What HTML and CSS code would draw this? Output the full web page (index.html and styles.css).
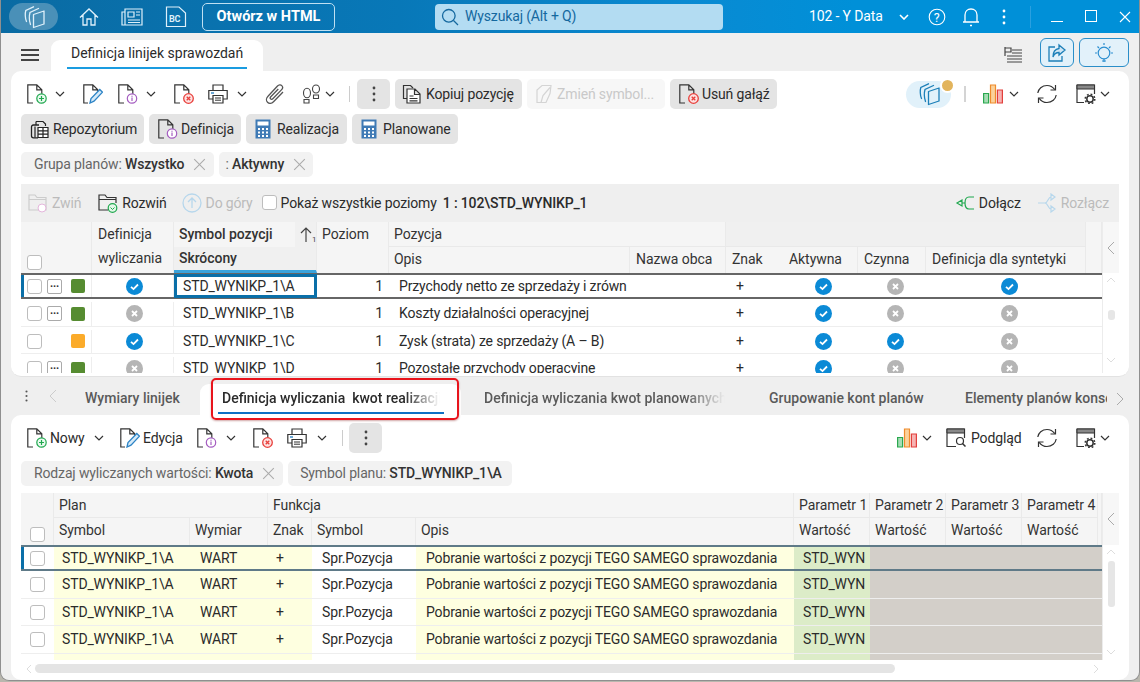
FILE: index.html
```html
<!DOCTYPE html>
<html lang="pl">
<head>
<meta charset="utf-8">
<title>Definicja linijek sprawozdań</title>
<link rel="stylesheet" href="styles.css">
</head>
<body>
<svg class="defs" width="0" height="0" aria-hidden="true">
  <symbol id="doc" viewBox="0 0 20 20"><path d="M6 19H.8V.8h9l5 5v6M9.800 .8v5H14.800" fill="none" stroke="#333" stroke-width="1.200"/></symbol>
  <symbol id="doc-plus" viewBox="0 0 20 20"><use href="#doc"/><circle cx="14.500" cy="14.500" r="4.700" fill="#eafaf0" stroke="#1fa84e" stroke-width="1.200"/><path d="M14.500 12v5M12 14.500h5" stroke="#1fa84e" stroke-width="1.200"/></symbol>
  <symbol id="doc-edit" viewBox="0 0 20 20"><path d="M5 19H.8V.8h9l5 5v2M9.800 .8v5H14.800" fill="none" stroke="#333" stroke-width="1.200"/><path d="M7 19l1-4.500L16.800 5.500l2.700 2.700-8.500 9z" fill="#d6eaf8" stroke="#2d84c6" stroke-width="1.300"/></symbol>
  <symbol id="doc-info" viewBox="0 0 20 20"><use href="#doc"/><circle cx="14" cy="14.500" r="4.700" fill="#fff" stroke="#a45cc0" stroke-width="1.200"/><path d="M14 13.500V17M14 11.800v1" stroke="#a45cc0" stroke-width="1.200"/></symbol>
  <symbol id="doc-x" viewBox="0 0 20 20"><use href="#doc"/><circle cx="14.500" cy="14.500" r="4.800" fill="#fde3e3" stroke="#e8403c" stroke-width="1.300"/><path d="M12.700 12.700l3.600 3.600M16.300 12.700l-3.600 3.600" stroke="#e8403c" stroke-width="1.300"/></symbol>
  <symbol id="print" viewBox="0 0 20 20"><path d="M5 6V1h10v5M5 15H.8V6.500h18.400V15H15" fill="none" stroke="#333" stroke-width="1.200"/><path d="M3 9h3" stroke="#2d84c6" stroke-width="1.400"/><path d="M5 11.500h10v7.500H5z" fill="#fff" stroke="#333" stroke-width="1.200"/><path d="M7 14h6M7 16.200h6" stroke="#333"/></symbol>
  <symbol id="clip" viewBox="0 0 20 20"><path d="M18 8l-9.500 9.800c-1.800 1.800-4.500 2-6 .5s-1.300-4.200.5-6L12.500 2c1.300-1.300 3.200-1.500 4.300-.4s.9 3-.4 4.300L7.800 14.700c-.7.700-1.600.8-2.200.2s-.5-1.500.2-2.200l7.500-7.700" fill="none" stroke="#555" stroke-width="1.300"/></symbol>
  <symbol id="steps" viewBox="0 0 20 20"><ellipse cx="5" cy="9" rx="3.500" ry="4.800" fill="none" stroke="#444" stroke-width="1.100"/><path d="M2 15.500h5v3.500H2z" fill="none" stroke="#444" stroke-width="1.100"/><ellipse cx="14" cy="5" rx="3.500" ry="4" fill="none" stroke="#444" stroke-width="1.100"/><path d="M11.500 11h5v3.500h-5z" fill="none" stroke="#444" stroke-width="1.100"/></symbol>
  <symbol id="copy" viewBox="0 0 20 20"><path d="M5 14.500H1.500v-13h7l2.500 2.500" fill="none" stroke="#333" stroke-width="1.200"/><path d="M5 5h8l5 5v9H5zM12.500 5v5.500H18M7.500 12h4M7.500 14.500h8M7.500 16.800h8" fill="#fff" stroke="#333" stroke-width="1.200"/></symbol>
  <symbol id="repo" viewBox="0 0 20 20"><path d="M6 2.500h7l2.500 2.500V7M6 2.500V6" fill="none" stroke="#222" stroke-width="1.200"/><path d="M3.500 6H9M3.500 6C2 6 1.500 7 1.500 8v9c0 1 .5 1.800 2 1.800H8" fill="none" stroke="#222" stroke-width="1.300"/><path d="M5 7.500v11" stroke="#222" stroke-width="1.200"/><path d="M8 8.500h10v10H8zM8 11.800h10M8 15.200h10M13 8.500v10" fill="#fff" stroke="#222" stroke-width="1.200"/></symbol>
  <symbol id="calc" viewBox="0 0 20 20"><rect x="2.500" y="0.500" width="15" height="19" fill="#3f7ab5"/><rect x="4.500" y="2.500" width="11" height="4" fill="#fff"/><path d="M5 9h2v2H5zM9 9h2v2H9zM13 9h2v2h-2zM5 12.500h2v2H5zM9 12.500h2v2H9zM13 12.500h2v2h-2zM5 16h2v2H5zM9 16h2v2H9zM13 16h2v2h-2z" fill="#fff"/></symbol>
  <symbol id="ghost" viewBox="0 0 20 20"><path d="M3 18.500V6l5-4.500h9l-1 8-4 9zM7 18.500l2-7 7-8" fill="none" stroke="#d4d4d4" stroke-width="1.200"/></symbol>
  <symbol id="chart" viewBox="0 0 20 20"><path d="M.6 9.500h5v9.500h-5z" fill="#a6dcb4" stroke="#2aa84f" stroke-width="1.200"/><path d="M7.500 1h5v18h-5z" fill="#fad29c" stroke="#ef8b2c" stroke-width="1.200"/><path d="M14.400 6h5v13h-5z" fill="#f6b3b3" stroke="#e2403c" stroke-width="1.200"/></symbol>
  <symbol id="refresh" viewBox="0 0 20 20"><path d="M.8 9C1.300 5 5 1.500 10 1.500c3.500 0 6 1.700 7.800 4.200M19.200 11c-.5 4-4.200 7.500-9.200 7.500-3.500 0-6-1.700-7.800-4.200" fill="none" stroke="#333" stroke-width="1.200"/><path d="M18.500 1V6h-5M1.500 19v-5h5" fill="none" stroke="#333" stroke-width="1.200"/></symbol>
  <symbol id="settings" viewBox="0 0 20 20"><path d="M8 18.500H1V1h17.500v9" fill="none" stroke="#333" stroke-width="1.200"/><path d="M1 1h17.500v4H1z" fill="#888" stroke="#333" stroke-width="1"/><circle cx="14" cy="15" r="3.200" fill="#fff" stroke="#333" stroke-width="1.500"/><circle cx="14" cy="15" r="4.800" fill="none" stroke="#333" stroke-width="1.500" stroke-dasharray="1.800 1.970"/></symbol>
  <symbol id="preview" viewBox="0 0 20 20"><path d="M10 18.500H1V1h17.500v9" fill="none" stroke="#333" stroke-width="1.200"/><path d="M1 1h17.500v4H1z" fill="#888" stroke="#333" stroke-width="1"/><circle cx="14" cy="13" r="3.500" fill="#fff" stroke="#333" stroke-width="1.200"/><path d="M16.500 15.500l3 3" stroke="#333" stroke-width="1.500"/></symbol>
  <symbol id="chev" viewBox="0 0 10 6"><path d="M1 1l4 4 4-4" fill="none" stroke="#333" stroke-width="1.200"/></symbol>
  <symbol id="yes" viewBox="0 0 17 17"><circle cx="8.500" cy="8.500" r="8.500" fill="#0b8ad6"/><path d="M5 8.800l2.500 2.300L12 6.500" fill="none" stroke="#fff" stroke-width="1.800"/></symbol>
  <symbol id="no" viewBox="0 0 17 17"><circle cx="8.500" cy="8.500" r="8.500" fill="#b5b5b5"/><path d="M6 6l5 5M11 6l-5 5" stroke="#fff" stroke-width="1.800"/></symbol>
  <symbol id="dots" viewBox="0 0 4 16"><circle cx="2" cy="2" r="1.400"/><circle cx="2" cy="8" r="1.400"/><circle cx="2" cy="14" r="1.400"/></symbol>
  <symbol id="stack" viewBox="0 0 24 24"><path d="M11.500 9.500L22 6v13l-10.500 3.500z" fill="none" stroke="currentColor" stroke-width="1.300" stroke-linejoin="round"/><path d="M8.500 19.500C7.300 16 7.300 10 8 7.500L16.500 3.500" fill="none" stroke="currentColor" stroke-width="1.300" stroke-linecap="round"/><path d="M4.500 16.500C3 13.500 3 8 3.800 5.500L11.500 1.800" fill="none" stroke="currentColor" stroke-width="1.300" stroke-linecap="round"/></symbol>
</svg>

<div class="app">
  <header class="topbar">
    <span class="logo-pill"><svg class="i24"><use href="#stack"/></svg></span>
    <svg class="i20 home" viewBox="0 0 20 20"><path d="M1 10.500L10 2l9 8.500M4 8v10h4v-6h4v6h4V8" fill="none" stroke="#dff0fa" stroke-width="1.300"/></svg>
    <svg class="i22 news" viewBox="0 0 22 20"><path d="M4 2h17v16H4zM4 5H1v13h3M7 5h6v5H7zM15 5h4M15 8h4M7 13h12M7 15.500h12" fill="none" stroke="#dff0fa" stroke-width="1.200"/></svg>
    <svg class="i22 bc" viewBox="0 0 22 22"><path d="M14 1H1.500v19.500h19V7z" fill="none" stroke="#dff0fa" stroke-width="1.200"/><text x="4" y="16" class="bc-text">BC</text></svg>
    <button class="open-html">Otwórz w HTML</button>
    <div class="search">
      <svg class="i18" viewBox="0 0 18 18"><circle cx="7.800" cy="7.800" r="6.300" fill="none" stroke="#14689f" stroke-width="1.300"/><path d="M12.500 12.500l4.500 4.500" stroke="#14689f" stroke-width="1.300"/></svg>
      <span>Wyszukaj (Alt + Q)</span>
    </div>
    <span class="company">102 - Y Data</span>
    <svg class="chev-w" viewBox="0 0 10 6"><path d="M1 1l4 4 4-4" fill="none" stroke="#fff" stroke-width="1.600"/></svg>
    <svg class="i18 help" viewBox="0 0 18 18"><circle cx="9" cy="9" r="7.800" fill="none" stroke="#fff" stroke-width="1.100"/><text x="5.800" y="13.500" class="help-text">?</text></svg>
    <svg class="i18 bell" viewBox="0 0 18 20"><path d="M3 15V8c0-3.500 2.500-6 6-6s6 2.500 6 6v7zM1 15h16M8 18.500h2" fill="none" stroke="#fff" stroke-width="1.300"/></svg>
    <svg class="kebab-w" fill="#fff"><use href="#dots"/></svg>
    <span class="bar-sep"></span>
    <span class="win-min"></span>
    <span class="win-max"></span>
    <svg class="win-close" viewBox="0 0 12 12"><path d="M1 1l10 10M11 1L1 11" stroke="#fff" stroke-width="1.100"/></svg>
  </header>

  <div class="tabrow">
    <span class="burger"><i></i><i></i><i></i></span>
    <div class="doc-tab"><span>Definicja linijek sprawozdań</span></div>
    <svg class="i18 flaglist" viewBox="0 0 18 16"><path d="M1 0v9M1 1h6v4H1M8 3h10M8 6h10M3 9h15M3 12h15M3 15h15" fill="none" stroke="#444" stroke-width="1.200"/></svg>
    <button class="blue-btn share"><svg class="i20" viewBox="0 0 20 20"><path d="M8 4H2v14h13v-5" fill="none" stroke="#1c7fb8" stroke-width="1.300"/><path d="M12 2l6 5-6 5V9.500C9 9.500 7 11 6 14c0-5 2-8 6-8.500z" fill="#cfe6f5" stroke="#1c7fb8" stroke-width="1.300"/></svg></button>
    <button class="blue-btn bulb"><svg class="i22" viewBox="0 0 22 22"><circle cx="11" cy="11" r="5.800" fill="none" stroke="#2a8ed0" stroke-width="1.200"/><path d="M11 17v3M9 19h4M11 1v2M2 11h2M18 11h2M4.500 4.500l1.500 1.500M17.500 4.500L16 6" stroke="#2a8ed0" stroke-width="1.200"/></svg></button>
  </div>

  <section class="panel panel-top">
    <div class="toolbar">
      <svg class="ic"><use href="#doc-plus"/></svg>
      <svg class="cv m8"><use href="#chev"/></svg>
      <svg class="ic m18"><use href="#doc-edit"/></svg>
      <svg class="ic m15"><use href="#doc-info"/></svg>
      <svg class="cv m8"><use href="#chev"/></svg>
      <svg class="ic m18"><use href="#doc-x"/></svg>
      <svg class="ic m14"><use href="#print"/></svg>
      <svg class="cv m9"><use href="#chev"/></svg>
      <svg class="ic m18"><use href="#clip"/></svg>
      <svg class="ic m17"><use href="#steps"/></svg>
      <svg class="cv m3"><use href="#chev"/></svg>
      <span class="sep m14"></span>
      <button class="btn kebab m7"><svg class="dots" fill="#444"><use href="#dots"/></svg></button>
      <button class="btn btn-copy m5"><svg class="ic"><use href="#copy"/></svg>Kopiuj pozycję</button>
      <button class="btn btn-sym off m5"><svg class="ic"><use href="#ghost"/></svg>Zmień symbol...</button>
      <button class="btn btn-del m5"><svg class="ic"><use href="#doc-x"/></svg>Usuń gałąź</button>
      <span class="right">
        <span class="pill-wrap"><svg class="i24"><use href="#stack"/></svg><i class="dot"></i></span>
        <span class="sep sep-wide"></span>
        <svg class="ic m17"><use href="#chart"/></svg>
        <svg class="cv m6"><use href="#chev"/></svg>
        <svg class="ic m18"><use href="#refresh"/></svg>
        <svg class="ic m19"><use href="#settings"/></svg>
        <svg class="cv m4"><use href="#chev"/></svg>
      </span>
    </div>
    <div class="toolbar row2">
      <button class="btn btn-repo"><svg class="ic"><use href="#repo"/></svg>Repozytorium</button>
      <button class="btn btn-defi m5"><svg class="ic"><use href="#doc-info"/></svg>Definicja</button>
      <button class="btn btn-real m5"><svg class="ic"><use href="#calc"/></svg>Realizacja</button>
      <button class="btn btn-plan m5"><svg class="ic"><use href="#calc"/></svg>Planowane</button>
    </div>
    <div class="chips">
      <span class="chip">Grupa planów:&nbsp;<b>Wszystko</b><em class="x"></em></span>
      <span class="chip chip-tight">:&nbsp;<b>Aktywny</b><em class="x"></em></span>
    </div>
    <div class="gridbar">
      <span class="gb-item dim"><svg class="ic" viewBox="0 0 20 20"><path d="M1 17V2h6l2 2.500h9V17zM1 6.500h17" fill="none" stroke="#ccc" stroke-width="1.200"/><circle cx="14" cy="15" r="4" fill="#fff" stroke="#e4b6dc"/></svg>Zwiń</span>
      <span class="gb-item rozwin"><svg class="ic" viewBox="0 0 20 20"><path d="M10 17H1V2h6l2 2.500h9V10M1 6.500h17" fill="none" stroke="#333" stroke-width="1.200"/><circle cx="14.500" cy="15" r="4.300" fill="#e3f7e9" stroke="#1fa84e" stroke-width="1.200"/><path d="M12.500 14.500l2 2 2-2" fill="none" stroke="#1fa84e"/></svg>Rozwiń</span>
      <span class="gb-item dim up"><svg class="ic" viewBox="0 0 20 20"><circle cx="10" cy="10" r="9" fill="none" stroke="#b7d7ec" stroke-width="1.300"/><path d="M10 15V5M6 9l4-4 4 4" fill="none" stroke="#b7d7ec" stroke-width="1.300"/></svg>Do góry</span>
      <label class="gb-check"><span class="cb"></span>Pokaż wszystkie poziomy</label>
      <b class="gb-path">1 : 102\STD_WYNIKP_1</b>
      <span class="right">
        <span class="gb-item"><svg class="ic" viewBox="0 0 20 20"><path d="M19 4h-5c-3 0-4 3-4 6s1 6 4 6h5M9.500 10H7M7 7l-5 3 5 3z" fill="none" stroke="#1fa84e" stroke-width="1.200"/></svg>Dołącz</span>
        <span class="gb-item dim disconnect"><svg class="ic" viewBox="0 0 20 20"><path d="M1 10h7M8 10c3 0 3-6 6-6M8 10c3 0 3 6 6 6M14 1v6l4-3zM14 13v6l4-3z" fill="none" stroke="#b7d7ec" stroke-width="1.200"/></svg>Rozłącz</span>
      </span>
    </div>

    <div class="ghead g1">
      <div class="hc hc-check"><span class="cb"></span></div>
      <div class="hc hc-def"><span>Definicja</span><span>wyliczania</span></div>
      <div class="hc hc-sym">
        <div class="sym-top"><strong>Symbol pozycji</strong><span class="sort"><svg class="sort-ic" viewBox="0 0 16 17"><path d="M6 16V2M1 7l5-5 5 5" fill="none" stroke="#444" stroke-width="1.200"/><text x="12" y="16" class="sort-n">1</text></svg></span></div>
        <div class="sym-bot"><strong>Skrócony</strong></div>
      </div>
      <div class="hc hc-poz">Poziom</div>
      <div class="hc hc-group g1-pos">Pozycja</div>
      <div class="hc hc-group g1-band"></div>
      <div class="hc hc-sub g1-opis">Opis</div>
      <div class="hc hc-sub g1-obca">Nazwa obca</div>
      <div class="hc hc-sub g1-znak">Znak</div>
      <div class="hc hc-sub g1-akt">Aktywna</div>
      <div class="hc hc-sub g1-czy">Czynna</div>
      <div class="hc hc-sub g1-syn">Definicja dla syntetyki</div>
      <div class="hc g1-end"></div>
      <div class="hc-side"><svg viewBox="0 0 8 14"><path d="M7 1L1 7l6 6" fill="none" stroke="#aaa"/></svg></div>
    </div>
    <div class="gbody gbody-top">
      <div class="rows">
        <div class="row g1r selected">
          <span class="c c-cb"><span class="cb"></span></span><span class="c c-more"><span class="more">...</span></span><span class="c c-col"><i class="sq green"></i></span>
          <span class="c c-ic c-def"><svg class="st"><use href="#yes"/></svg></span>
          <span class="c c-sym focus">STD_WYNIKP_1\A</span><span class="c c-num">1</span><span class="c c-txt">Przychody netto ze sprzedaży i zrówn</span><span class="c"></span><span class="c c-plus">+</span>
          <span class="c c-ic c-akt"><svg class="st"><use href="#yes"/></svg></span><span class="c c-ic c-czy"><svg class="st"><use href="#no"/></svg></span><span class="c c-ic c-czy"><svg class="st"><use href="#yes"/></svg></span>
        </div>
        <div class="row g1r">
          <span class="c c-cb"><span class="cb"></span></span><span class="c c-more"><span class="more">...</span></span><span class="c c-col"><i class="sq green"></i></span>
          <span class="c c-ic c-def"><svg class="st"><use href="#no"/></svg></span>
          <span class="c c-sym">STD_WYNIKP_1\B</span><span class="c c-num">1</span><span class="c c-txt">Koszty działalności operacyjnej</span><span class="c"></span><span class="c c-plus">+</span>
          <span class="c c-ic c-akt"><svg class="st"><use href="#yes"/></svg></span><span class="c c-ic c-czy"><svg class="st"><use href="#no"/></svg></span><span class="c c-ic c-czy"><svg class="st"><use href="#no"/></svg></span>
        </div>
        <div class="row g1r">
          <span class="c c-cb"><span class="cb"></span></span><span class="c c-more"></span><span class="c c-col"><i class="sq orange"></i></span>
          <span class="c c-ic c-def"><svg class="st"><use href="#yes"/></svg></span>
          <span class="c c-sym">STD_WYNIKP_1\C</span><span class="c c-num">1</span><span class="c c-txt">Zysk (strata) ze sprzedaży (A – B)</span><span class="c"></span><span class="c c-plus">+</span>
          <span class="c c-ic c-akt"><svg class="st"><use href="#yes"/></svg></span><span class="c c-ic c-czy"><svg class="st"><use href="#yes"/></svg></span><span class="c c-ic c-czy"><svg class="st"><use href="#no"/></svg></span>
        </div>
        <div class="row g1r">
          <span class="c c-cb"><span class="cb"></span></span><span class="c c-more"><span class="more">...</span></span><span class="c c-col"><i class="sq green"></i></span>
          <span class="c c-ic c-def"><svg class="st"><use href="#no"/></svg></span>
          <span class="c c-sym">STD_WYNIKP_1\D</span><span class="c c-num">1</span><span class="c c-txt">Pozostałe przychody operacyjne</span><span class="c"></span><span class="c c-plus">+</span>
          <span class="c c-ic c-akt"><svg class="st"><use href="#yes"/></svg></span><span class="c c-ic c-czy"><svg class="st"><use href="#no"/></svg></span><span class="c c-ic c-czy"><svg class="st"><use href="#no"/></svg></span>
        </div>
      </div>
      <div class="vscroll vs-top">
        <svg class="vc" viewBox="0 0 10 6"><path d="M1 5l4-4 4 4" fill="none" stroke="#ddd"/></svg>
        <span class="thumb thumb-top"></span>
        <svg class="vc" viewBox="0 0 10 6"><path d="M1 1l4 4 4-4" fill="none" stroke="#ddd"/></svg>
      </div>
    </div>
  </section>

  <nav class="tabs2">
    <svg class="kebab-d" fill="#555"><use href="#dots"/></svg>
    <svg class="tab-arrow left" viewBox="0 0 8 14"><path d="M7 1L1 7l6 6" fill="none" stroke="#ccc"/></svg>
    <span class="t2 t-wym">Wymiary linijek</span>
    <span class="t2 active"><span class="fade">Definicja wyliczania&nbsp; kwot realizacji</span></span>
    <span class="t2 t-plan fade">Definicja wyliczania kwot planowanych</span>
    <span class="t2 t-gr">Grupowanie kont planów</span>
    <span class="t2 t-el">Elementy planów konsolidacji</span>
    <svg class="tab-arrow right" viewBox="0 0 8 14"><path d="M1 1l6 6-6 6" fill="none" stroke="#aaa"/></svg>
  </nav>

  <section class="panel panel-bot">
    <div class="toolbar">
      <svg class="ic"><use href="#doc-plus"/></svg><span class="lbl lbl-new m3">Nowy</span>
      <svg class="cv m13"><use href="#chev"/></svg>
      <svg class="ic m16"><use href="#doc-edit"/></svg><span class="lbl lbl-edit m3">Edycja</span>
      <svg class="ic m14"><use href="#doc-info"/></svg>
      <svg class="cv m9"><use href="#chev"/></svg>
      <svg class="ic m17"><use href="#doc-x"/></svg>
      <svg class="ic m14"><use href="#print"/></svg>
      <svg class="cv m10"><use href="#chev"/></svg>
      <span class="sep m15"></span>
      <button class="btn kebab m6"><svg class="dots" fill="#444"><use href="#dots"/></svg></button>
      <span class="right">
        <svg class="ic"><use href="#chart"/></svg>
        <svg class="cv m5"><use href="#chev"/></svg>
        <svg class="ic m14"><use href="#preview"/></svg><span class="lbl lbl-view m5">Podgląd</span>
        <svg class="ic m17"><use href="#refresh"/></svg>
        <svg class="ic m19"><use href="#settings"/></svg>
        <svg class="cv m4"><use href="#chev"/></svg>
      </span>
    </div>
    <div class="chips">
      <span class="chip">Rodzaj wyliczanych wartości:&nbsp;<b>Kwota</b><em class="x"></em></span>
      <span class="chip chip-noclose">Symbol planu:&nbsp;<b>STD_WYNIKP_1\A</b></span>
    </div>
    <div class="ghead g2">
      <div class="hc g2-check"><span class="cb"></span></div>
      <div class="hc hc-group g2-plan">Plan</div>
      <div class="hc hc-group g2-fun">Funkcja</div>
      <div class="hc hc-group g2-p1">Parametr 1</div>
      <div class="hc hc-group g2-p2">Parametr 2</div>
      <div class="hc hc-group g2-p3">Parametr 3</div>
      <div class="hc hc-group g2-p4">Parametr 4</div>
      <div class="hc hc-sub g2-a">Symbol</div>
      <div class="hc hc-sub g2-b">Wymiar</div>
      <div class="hc hc-sub g2-c">Znak</div>
      <div class="hc hc-sub g2-d">Symbol</div>
      <div class="hc hc-sub g2-e">Opis</div>
      <div class="hc hc-sub g2-f">Wartość</div>
      <div class="hc hc-sub g2-g">Wartość</div>
      <div class="hc hc-sub g2-h">Wartość</div>
      <div class="hc hc-sub g2-i">Wartość</div>
      <div class="hc g2-end"></div>
      <div class="hc-side g2-side"><svg viewBox="0 0 8 14"><path d="M7 1L1 7l6 6" fill="none" stroke="#aaa"/></svg></div>
    </div>
    <div class="gbody gbody-bot">
      <div class="rows">
        <div class="row g2r selected"><span class="c c-cb2"><span class="cb"></span></span><span class="c y p8">STD_WYNIKP_1\A</span><span class="c y p10">WART</span><span class="c y p12">+</span><span class="c p10">Spr.Pozycja</span><span class="c y p10">Pobranie wartości z pozycji TEGO SAMEGO sprawozdania</span><span class="c gr p9">STD_WYN</span><span class="c ash"></span></div>
        <div class="row g2r"><span class="c c-cb2"><span class="cb"></span></span><span class="c y p8">STD_WYNIKP_1\A</span><span class="c y p10">WART</span><span class="c y p12">+</span><span class="c p10">Spr.Pozycja</span><span class="c y p10">Pobranie wartości z pozycji TEGO SAMEGO sprawozdania</span><span class="c gr p9">STD_WYN</span><span class="c ash"></span></div>
        <div class="row g2r"><span class="c c-cb2"><span class="cb"></span></span><span class="c y p8">STD_WYNIKP_1\A</span><span class="c y p10">WART</span><span class="c y p12">+</span><span class="c p10">Spr.Pozycja</span><span class="c y p10">Pobranie wartości z pozycji TEGO SAMEGO sprawozdania</span><span class="c gr p9">STD_WYN</span><span class="c ash"></span></div>
        <div class="row g2r"><span class="c c-cb2"><span class="cb"></span></span><span class="c y p8">STD_WYNIKP_1\A</span><span class="c y p10">WART</span><span class="c y p12">+</span><span class="c p10">Spr.Pozycja</span><span class="c y p10">Pobranie wartości z pozycji TEGO SAMEGO sprawozdania</span><span class="c gr p9">STD_WYN</span><span class="c ash"></span></div>
        <div class="row g2r"><span class="c c-cb2"></span><span class="c y"></span><span class="c y"></span><span class="c y"></span><span class="c"></span><span class="c y"></span><span class="c gr"></span><span class="c ash"></span></div>
      </div>
      <div class="vscroll vs-bot">
        <svg class="vc" viewBox="0 0 10 6"><path d="M1 5l4-4 4 4" fill="none" stroke="#ddd"/></svg>
        <span class="thumb thumb-bot"></span>
        <svg class="vc" viewBox="0 0 10 6"><path d="M1 1l4 4 4-4" fill="none" stroke="#ddd"/></svg>
      </div>
    </div>
    <div class="hscroll">
      <svg class="hc-arrow" viewBox="0 0 6 10"><path d="M5 1L1 5l4 4" fill="none" stroke="#ddd"/></svg>
      <span class="hthumb"></span>
      <svg class="hc-arrow hc-r" viewBox="0 0 6 10"><path d="M1 1l4 4-4 4" fill="none" stroke="#ddd"/></svg>
    </div>
  </section>
</div>
</body>
</html>
```
FILE: styles.css
```css
* { box-sizing: border-box; }
html, body { margin: 0; padding: 0; }
body {
  width: 1140px; height: 682px; overflow: hidden;
  background: #b9b7ae;
  font: 14px/1.2 Roboto, "Liberation Sans", sans-serif;
  letter-spacing: -.14px;
  color: #2b2b2b;
}
.defs { position: absolute; }
button { font: inherit; letter-spacing: inherit; color: inherit; border: 0; padding: 0; background: none; }
svg { display: block; flex: none; }
.i18 { width: 18px; height: 18px; }
.i20 { width: 20px; height: 20px; }
.i22 { width: 22px; height: 22px; }
.i24 { width: 24px; height: 24px; }

.app {
  width: 1140px; height: 681px;
  background: #efefef;
  border: 1px solid #8f8f8f; border-top: 0;
  border-radius: 0 0 9px 9px;
  overflow: hidden;
  display: flex; flex-direction: column;
}

/* top bar */
.topbar {
  height: 33px; flex: none;
  display: flex; align-items: center;
  background: linear-gradient(90deg, #0a6ba3 0%, #0878b8 35%, #0a8ad2 60%, #0090d8 75%);
  color: #fff;
}
.logo-pill {
  margin-left: 8px; width: 49px; height: 27px; border-radius: 14px;
  background: #4a90b8; color: #dff0fa;
  display: flex; align-items: center; justify-content: center;
}
.home { margin-left: 21px; }
.news { margin-left: 22px; }
.bc { margin-left: 22px; }
.bc-text { font: 700 9px Roboto, sans-serif; fill: #dff0fa; }
.help-text { font: 400 12.500px Roboto, sans-serif; fill: #fff; }
.open-html {
  margin-left: 15px; width: 133px; height: 28px;
  border: 1px solid #bfe0f2; border-radius: 5px; letter-spacing: 0;
  font-weight: 700; font-size: 14.500px; color: #fff; white-space: nowrap;
}
.search {
  margin-left: 100px; width: 288px; height: 26px;
  background: #b3dcf2; border-radius: 4px;
  display: flex; align-items: center; gap: 6px; padding-left: 6px;
  color: #14689f; font-size: 14px;
}
.company { margin-left: 86px; font-weight: 400; width: 90px; white-space: nowrap; }
.chev-w { width: 10px; height: 6px; }
.help { margin-left: 19px; }
.bell { margin-left: 16px; height: 20px; }
.kebab-w { width: 4px; height: 16px; margin-left: 22px; }
.bar-sep { width: 1px; height: 22px; background: #2aa0e0; margin-left: 24px; }
.win-min { width: 12px; height: 1px; background: #fff; margin-left: 20px; margin-top: 9px; }
.win-max { width: 12px; height: 12px; border: 1.300px solid #fff; margin-left: 22px; margin-top: -2px; }
.win-close { width: 12px; height: 12px; margin-left: 22px; }

/* document tab row */
.tabrow { height: 38px; flex: none; display: flex; align-items: flex-end; }
.burger {
  margin-left: 20px; width: 18px; align-self: flex-start; margin-top: 16px;
  display: flex; flex-direction: column; gap: 3px;
}
.burger i { display: block; height: 2px; background: #444; }
.doc-tab {
  margin-left: 12px; width: 212px; height: 31px;
  background: #fff; border-radius: 9px 9px 0 0;
  padding: 0 16px 0 16px; letter-spacing: 0;
}
.doc-tab span {
  display: block; height: 29px; line-height: 26px; padding-left: 4px;
  border-bottom: 2px solid #1a9ce0; white-space: nowrap;
}
.flaglist { margin-left: 741px; align-self: flex-start; margin-top: 14px; height: 16px; }
.blue-btn {
  height: 29px; border: 1px solid #2a8ec9; border-radius: 6px; background: #e2f1fa;
  display: flex; align-items: center; justify-content: center;
  align-self: flex-start; margin-top: 5px;
}
.share { width: 34px; margin-left: 18px; }
.bulb { width: 50px; margin-left: 5px; }

/* panels */
.panel {
  margin: 0 10px; width: 1118px; background: #fff;
  border-radius: 10px; padding: 8px 10px 0; flex: none;
}
.panel-top { height: 306px; border-bottom: 1px solid #e2e2e2; }
.panel-bot { height: 265px; }

.toolbar { height: 30px; display: flex; align-items: center; padding-left: 6px; }
.row2 { margin-top: 5px; padding-left: 0; }
.right { margin-left: auto; display: flex; align-items: center; }
.toolbar > .right { padding-right: 9px; }
.ic { width: 20px; height: 20px; }
.cv { width: 10px; height: 6px; }
.m3 { margin-left: 3px; } .m4 { margin-left: 4px; } .m5 { margin-left: 5px; } .m6 { margin-left: 6px; }
.m7 { margin-left: 7px; } .m8 { margin-left: 8px; } .m9 { margin-left: 9px; } .m10 { margin-left: 10px; }
.m13 { margin-left: 13px; } .m14 { margin-left: 14px; } .m15 { margin-left: 15px; } .m16 { margin-left: 16px; }
.m17 { margin-left: 17px; } .m18 { margin-left: 18px; } .m19 { margin-left: 19px; }
.sep { width: 1px; height: 16px; background: #ccc; }
.btn {
  height: 30px; background: #e4e4e4; border-radius: 5px;
  display: flex; align-items: center; gap: 3px; padding: 0 0 0 9px; white-space: nowrap;
}
.btn-copy { width: 127px; padding-left: 7px; gap: 4px; }
.btn-sym { width: 138px; padding-left: 7px; }
.btn-del { width: 107px; }
.btn-repo { width: 123px; }
.btn-defi { width: 92px; }
.btn-real { width: 101px; padding-left: 7px; gap: 4px; }
.btn-plan { width: 106px; padding-left: 7px; gap: 4px; }
.btn.off { background: #f7f7f7; color: #c9c9c9; }
.kebab { width: 33px; justify-content: center; padding: 0; }
.dots { width: 4px; height: 16px; }
.pill-wrap {
  position: relative; width: 45px; height: 27px; border-radius: 14px; background: #e1f1fa; color: #1c7fb8;
  display: flex; align-items: center; justify-content: center;
}
.dot {
  position: absolute; right: -4px; top: -3px; width: 15px; height: 15px; border-radius: 50%;
  background: #e2b45c; border: 2px solid #fff;
}
.sep-wide { width: 2px; height: 16px; margin-left: 13px; background: #d4d4d4; }

/* filter chips */
.chips { margin-top: 8px; height: 25px; display: flex; gap: 5px; }
.chip {
  height: 25px; background: #f2f2f2; border-radius: 5px; color: #666;
  display: flex; align-items: center; padding: 0 9px 0 13px; white-space: nowrap;
}
.chip b { font-weight: 500; color: #333; }
.chip-tight { padding: 0 8px 0 6px; }
.chip-noclose { padding: 0 10px 0 12px; }
.x { position: relative; width: 11px; height: 11px; margin-left: 10px; display: block; }
.x::before, .x::after {
  content: ""; position: absolute; left: 5px; top: -2px; width: 1px; height: 15px; background: #aaa;
}
.x::before { transform: rotate(45deg); }
.x::after { transform: rotate(-45deg); }

/* grid toolbar */
.gridbar {
  margin-top: 7px; height: 38px; background: #efefef;
  display: flex; align-items: center; padding: 0 10px 0 7px;
  width: 1098px; color: #2b2b2b;
}
.gb-item { display: flex; align-items: center; gap: 4px; white-space: nowrap; }
.dim { color: #bbb; }
.rozwin { margin-left: 17px; }
.up { margin-left: 15px; }
.gb-check { margin-left: 9px; display: flex; align-items: center; gap: 4px; white-space: nowrap; }
.gb-path { margin-left: 6px; font-weight: 500; }
.disconnect { margin-left: 16px; }
.cb {
  display: block; width: 15px; height: 15px; background: #fff;
  border: 1px solid #bdbdbd; border-radius: 3px; flex: none;
}

/* grid header */
.ghead { width: 1098px; display: grid; background: #f5f5f5; letter-spacing: -.06px; }
.g1 {
  height: 51px;
  grid-template-columns: 71px 82px 143px 72px 241px 96px 46px 86px 68px 160px 16px 17px;
  grid-template-rows: 25px 26px;
}
.hc { border-right: 1px solid #eaeaea; padding: 0 5px; display: flex; align-items: center; white-space: nowrap; color: #333; }
.hc-check { grid-row: 1 / 3; grid-column: 1; align-items: flex-end; padding: 0 0 3px 6px; }
.hc-def { grid-row: 1 / 3; grid-column: 2; flex-direction: column; align-items: flex-start; justify-content: flex-start; padding: 0 0 0 6px; line-height: 24px; }
.hc-sym { grid-row: 1 / 3; grid-column: 3; padding: 0; display: block; border-bottom: 3px solid #3aa3dc; background: #f5f5f5; }
.hc-sym strong { font-weight: 500; }
.sym-top { height: 25px; display: flex; align-items: center; justify-content: space-between; padding-left: 5px; }
.sym-bot { height: 23px; display: flex; align-items: center; padding-left: 5px; background: #f0f0f0; }
.sort { width: 21px; height: 25px; background: #f0f0f0; display: flex; align-items: center; justify-content: flex-end; }
.sort-ic { width: 16px; height: 17px; }
.sort-n { font: 400 8px Roboto, sans-serif; fill: #444; }
.hc-poz { grid-row: 1 / 3; grid-column: 4; align-items: flex-start; padding: 4px 0 0 5px; }
.hc-group { border-bottom: 1px solid #e9e9e9; }
.hc-sub { padding-bottom: 1px; }
.g1-pos { grid-column: 5 / 7; grid-row: 1; }
.g1-band { grid-column: 7 / 11; grid-row: 1; background: #f0f0f0; }
.g1-opis { grid-column: 5; grid-row: 2; }
.g1-obca { grid-column: 6; grid-row: 2; padding-left: 6px; }
.g1-znak { grid-column: 7; grid-row: 2; padding-left: 6px; border-right: 0; }
.g1-akt { grid-column: 8; grid-row: 2; padding-left: 17px; }
.g1-czy { grid-column: 9; grid-row: 2; padding-left: 6px; }
.g1-syn { grid-column: 10; grid-row: 2; padding-left: 6px; }
.g1-end { grid-column: 11; grid-row: 1 / 3; background: #f5f5f5; }
.hc-side { grid-column: 12; grid-row: 1 / 3; background: #f7f7f7; display: flex; align-items: center; justify-content: center; border-left: 1px solid #ececec; }
.hc-side svg { width: 8px; height: 14px; }

/* grid body */
.gbody { width: 1098px; display: flex; overflow: hidden; }
.gbody-top { height: 100px; }
.gbody-bot { height: 115px; }
.rows { width: 1081px; flex: none; }
.row { display: grid; height: 27.500px; padding-top: 3px; border-bottom: 1px solid #eee; }
.g1r { grid-template-columns: 24px 20px 27px 82px 143px 72px 241px 96px 46px 86px 68px 160px 16px; }
.c { display: flex; align-items: center; white-space: nowrap; overflow: hidden; min-width: 0; }
.c-cb { padding-left: 6px; }
.c-col { padding-left: 6px; border-right: 1px solid #eee; }
.more {
  width: 15px; height: 15px; margin-left: 2px; border: 1px solid #aaa; border-radius: 2px;
  font-size: 11px; font-weight: 700; line-height: 8px; text-align: center; color: #333; display: block;
}
.sq { display: block; width: 14px; height: 14px; border-radius: 2px; }
.green { background: #568c31; }
.orange { background: #fbab2a; }
.c-ic { justify-content: center; }
.c-def { padding-left: 4px; border-right: 1px solid #eee; }
.c-akt { padding-left: 16px; }
.c-czy { padding-left: 6px; }
.st { width: 17px; height: 17px; }
.c-sym { padding-left: 9px; }
.c-num { justify-content: flex-end; padding-right: 6px; }
.c-txt { padding-left: 10px; }
.c-plus { padding-left: 10px; }
.selected { height: 26px; padding-top: 0; border-top: 2px solid #666; border-bottom: 2px solid #666; box-shadow: inset 3px 0 0 #0a6fa8; }
.focus { border: 3px solid #0a6fa8; margin: -1px 0; padding-left: 6px; }
.vscroll { width: 17px; display: flex; flex-direction: column; align-items: center; border-left: 1px solid #ececec; padding-top: 4px; }
.vc { width: 10px; height: 6px; }
.thumb { width: 7px; background: #e6e6e6; border-radius: 3px; }
.thumb-top { height: 10px; margin-top: 27px; }
.vs-top .vc:last-child { margin-top: 37px; }
.thumb-bot { height: 46px; margin-top: 6px; }
.vs-bot .vc:last-child { margin-top: 42px; }

/* lower tabs */
.tabs2 { height: 38px; flex: none; display: flex; align-items: flex-end; position: relative; white-space: nowrap; color: #5a5a5a; font-weight: 500; letter-spacing: 0; }
.kebab-d { width: 3px; height: 14px; margin-left: 24px; align-self: center; }
.tab-arrow { width: 8px; height: 14px; align-self: center; }
.tab-arrow.left { margin-left: 21px; }
.tab-arrow.right { position: absolute; left: 1115px; top: 15px; }
.t2 { height: 31px; line-height: 28px; display: block; overflow: hidden; }
.t-wym { margin-left: 28px; width: 115px; }
.active {
  width: 261px; background: #fff; border-radius: 9px 9px 0 0;
  padding: 0 16px 0 22px; color: #2b2b2b; position: relative; overflow: visible;
}
.active .fade { display: block; width: 218px; overflow: hidden; }
.active::before {
  content: ""; position: absolute; left: 11px; top: -6px; width: 244px; height: 38px;
  border: 2px solid #e8141c; border-radius: 5px; box-shadow: 0 1px 2px rgba(120,0,0,.35);
}
.active::after {
  content: ""; position: absolute; left: 18px; bottom: 1px; width: 226px; height: 2px; background: #0d70c4;
}
.fade { -webkit-mask-image: linear-gradient(90deg, #000 84%, transparent 100%); mask-image: linear-gradient(90deg, #000 84%, transparent 100%); }
.t-plan { margin-left: 23px; width: 241px; }
.t-gr { margin-left: 44px; width: 172px; }
.t-el { margin-left: 24px; width: 142px; }

/* lower grid */
.g2 {
  height: 52px; margin-top: 7px;
  grid-template-columns: 33px 136px 78px 44px 104px 378px 76px 76px 76px 76px 4px 17px;
  grid-template-rows: 25px 27px;
}
.g2 .hc { padding-left: 5px; }
.g2 .hc-sub { padding-bottom: 3px; }
.g2 .g2-check { grid-column: 1; grid-row: 1 / 3; align-items: flex-end; padding: 0 0 3px 9px; }
.g2-plan { grid-column: 2 / 4; grid-row: 1; }
.g2-fun { grid-column: 4 / 7; grid-row: 1; }
.g2-p1 { grid-column: 7; grid-row: 1; } .g2-p2 { grid-column: 8; grid-row: 1; }
.g2-p3 { grid-column: 9; grid-row: 1; } .g2-p4 { grid-column: 10; grid-row: 1; }
.g2-a { grid-column: 2; grid-row: 2; } .g2-b { grid-column: 3; grid-row: 2; }
.g2-c { grid-column: 4; grid-row: 2; } .g2-d { grid-column: 5; grid-row: 2; }
.g2-e { grid-column: 6; grid-row: 2; } .g2-f { grid-column: 7; grid-row: 2; }
.g2-g { grid-column: 8; grid-row: 2; } .g2-h { grid-column: 9; grid-row: 2; }
.g2-i { grid-column: 10; grid-row: 2; }
.g2 .g2-end { grid-column: 11; grid-row: 1 / 3; padding: 0; }
.g2-side { grid-column: 12; }
.g2r { grid-template-columns: 33px 136px 78px 44px 104px 378px 76px 232px; }
.g2r .c { background-clip: padding-box; }
.g2r.selected { border-color: #5f7a88; }
.g2r { padding-top: 0; }
.g2r .c-cb2, .g2r .p8, .g2r .p9, .g2r .p10, .g2r .p12 { padding-top: 1px; }
.c-cb2 { padding-left: 9px; }
.y { background: #feffe0; }
.gr { background: #dcecc8; }
.ash { background: #d3cfc9; }
.p8 { padding-left: 8px; } .p9 { padding-left: 9px; } .p10 { padding-left: 10px; } .p12 { padding-left: 8px; }
.hscroll { height: 17px; width: 1098px; display: flex; align-items: center; padding-left: 5px; }
.hc-arrow { width: 6px; height: 10px; }
.hthumb { width: 860px; height: 9px; margin-left: 3px; border-radius: 5px; background: #e4e4e4; }
.hc-r { margin-left: 198px; }
.lbl { white-space: nowrap; }
.lbl-new { width: 31px; }
.lbl-edit { width: 40px; }
.lbl-view { width: 49px; }
```
